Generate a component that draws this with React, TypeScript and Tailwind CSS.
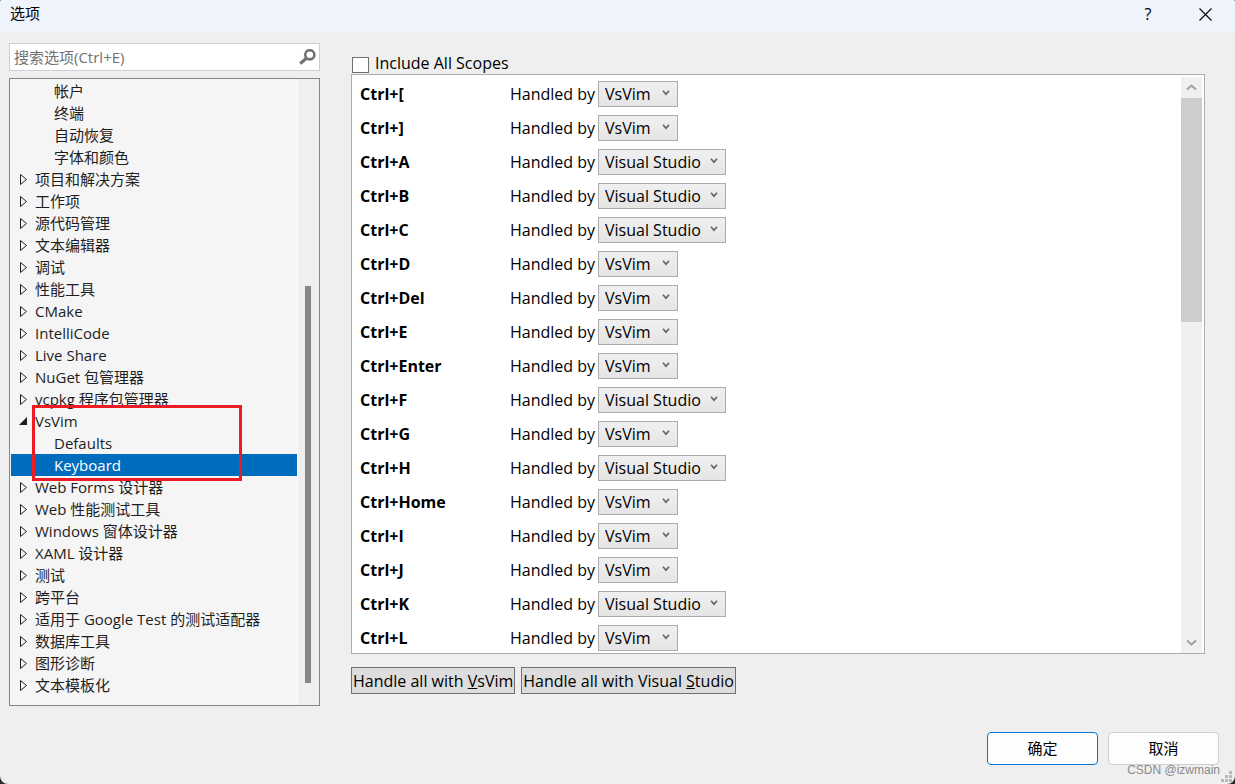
import React, { useState } from 'react';

type Handler = 'VsVim' | 'Visual Studio';

interface TreeNode {
  label: string;
  child?: boolean;
  open?: boolean;
  selected?: boolean;
}

const treeNodes: TreeNode[] = [
  { label: '帐户', child: true },
  { label: '终端', child: true },
  { label: '自动恢复', child: true },
  { label: '字体和颜色', child: true },
  { label: '项目和解决方案' },
  { label: '工作项' },
  { label: '源代码管理' },
  { label: '文本编辑器' },
  { label: '调试' },
  { label: '性能工具' },
  { label: 'CMake' },
  { label: 'IntelliCode' },
  { label: 'Live Share' },
  { label: 'NuGet 包管理器' },
  { label: 'vcpkg 程序包管理器' },
  { label: 'VsVim', open: true },
  { label: 'Defaults', child: true },
  { label: 'Keyboard', child: true, selected: true },
  { label: 'Web Forms 设计器' },
  { label: 'Web 性能测试工具' },
  { label: 'Windows 窗体设计器' },
  { label: 'XAML 设计器' },
  { label: '测试' },
  { label: '跨平台' },
  { label: '适用于 Google Test 的测试适配器' },
  { label: '数据库工具' },
  { label: '图形诊断' },
  { label: '文本模板化' },
];

const initialBindings: { keys: string; handler: Handler }[] = [
  { keys: 'Ctrl+[', handler: 'VsVim' },
  { keys: 'Ctrl+]', handler: 'VsVim' },
  { keys: 'Ctrl+A', handler: 'Visual Studio' },
  { keys: 'Ctrl+B', handler: 'Visual Studio' },
  { keys: 'Ctrl+C', handler: 'Visual Studio' },
  { keys: 'Ctrl+D', handler: 'VsVim' },
  { keys: 'Ctrl+Del', handler: 'VsVim' },
  { keys: 'Ctrl+E', handler: 'VsVim' },
  { keys: 'Ctrl+Enter', handler: 'VsVim' },
  { keys: 'Ctrl+F', handler: 'Visual Studio' },
  { keys: 'Ctrl+G', handler: 'VsVim' },
  { keys: 'Ctrl+H', handler: 'Visual Studio' },
  { keys: 'Ctrl+Home', handler: 'VsVim' },
  { keys: 'Ctrl+I', handler: 'VsVim' },
  { keys: 'Ctrl+J', handler: 'VsVim' },
  { keys: 'Ctrl+K', handler: 'Visual Studio' },
  { keys: 'Ctrl+L', handler: 'VsVim' },
];

const TitleBar: React.FC = () => (
  <header className="flex h-[33px] items-start justify-between bg-[#eff3fb] pl-[10px] pr-4">
    <h1 className="pt-[3px] leading-5">选项</h1>
    <div className="flex gap-[29px]">
      <button className="flex h-7 w-7 items-center justify-center" aria-label="Help">
        <span className="text-base leading-5">?</span>
      </button>
      <button className="flex h-7 w-7 items-center justify-center" aria-label="Close">
        <svg width="13" height="13" viewBox="0 0 13 13" fill="none" stroke="#111" strokeWidth="1.3">
          <path d="M0.5 0.5L12.5 12.5M12.5 0.5L0.5 12.5" />
        </svg>
      </button>
    </div>
  </header>
);

const SearchBox: React.FC = () => (
  <div className="flex h-7 items-center border border-[#cccedb] bg-white pl-1 pr-[3px]">
    <input
      type="text"
      aria-label="搜索选项"
      placeholder="搜索选项(Ctrl+E)"
      className="min-w-0 flex-1 bg-transparent outline-none placeholder:text-[#717171]"
    />
    <svg width="17" height="17" viewBox="0 0 17 17" fill="none" stroke="#717171">
      <circle cx="10.8" cy="5.8" r="4.6" strokeWidth="2.6" />
      <path d="M7.4 9.2L1.2 14.6" strokeWidth="3.2" />
    </svg>
  </div>
);

const TreeArrow: React.FC<{ open?: boolean }> = ({ open }) => (
  <svg width="10" height="12" viewBox="0 0 10 12">
    {open ? (
      <path d="M9 2V10H1Z" fill="#1e1e1e" />
    ) : (
      <path d="M2.5 1.5V11.5L8.5 6.5Z" fill="none" stroke="#1e1e1e" />
    )}
  </svg>
);

const OptionsTree: React.FC = () => (
  <div className="flex border border-[#828790] bg-[#f5f5f5]">
    <ul className="flex-1 pb-[9px] pl-px pt-px">
      {treeNodes.map((node) => (
        <li
          key={node.label}
          className={`
            relative flex h-[22px] items-center whitespace-nowrap leading-[22px]
            ${node.child ? 'pl-[43px]' : 'gap-[7px] pl-[7px]'}
            ${node.selected ? 'bg-[#006cbe] text-white' : 'text-[#1e1e1e]'}
          `}
        >
          {!node.child && <TreeArrow open={node.open} />}
          {node.label}
          {/* Highlight frame round the VsVim group */}
          {node.open && (
            <span className="pointer-events-none absolute -top-[5px] left-[21px] z-10 h-[76px] w-[210px] border-3 border-[#ed1c24]" />
          )}
        </li>
      ))}
    </ul>
    <div className="flex w-[22px] flex-col border-l border-white bg-[#efefef] pb-[22px] pl-[7px] pt-[207px]">
      <div className="w-[6px] flex-1 bg-[#868686]" />
    </div>
  </div>
);

const ScrollChevron: React.FC<{ up?: boolean }> = ({ up }) => (
  <svg width="11" height="7" viewBox="0 0 11 7" fill="none" stroke="#a0a0a0" strokeWidth="2">
    <path d={up ? 'M1 5.5L5.5 1.5L10 5.5' : 'M1 1.5L5.5 5.5L10 1.5'} />
  </svg>
);

interface HandlerSelectProps {
  id: string;
  value: Handler;
  onChange: (value: Handler) => void;
}

const HandlerSelect: React.FC<HandlerSelectProps> = ({ id, value, onChange }) => (
  <div className={`relative h-[26px] ${value === 'VsVim' ? 'w-20' : 'w-32'}`}>
    <select
      id={id}
      value={value}
      onChange={(e) => onChange(e.target.value as Handler)}
      className="h-full w-full appearance-none border border-[#acacac] bg-linear-to-b from-[#f0f0f0] to-[#e5e5e5] pl-[6px] leading-6"
    >
      <option>VsVim</option>
      <option>Visual Studio</option>
    </select>
    <svg
      className="pointer-events-none absolute right-2 top-[9px]"
      width="8"
      height="6"
      viewBox="0 0 8 6"
      fill="none"
      stroke="#606060"
      strokeWidth="1.6"
    >
      <path d="M1 0.8L4 4.2L7 0.8" />
    </svg>
  </div>
);

export default function App() {
  const [bindings, setBindings] = useState(initialBindings);
  const [allScopes, setAllScopes] = useState(false);

  const setHandler = (index: number, handler: Handler) =>
    setBindings(bindings.map((b, i) => (i === index ? { ...b, handler } : b)));

  const setAll = (handler: Handler) => setBindings(bindings.map((b) => ({ ...b, handler })));

  return (
    <div className="bg-[#2b2b2b]">
      <div className="relative flex min-h-screen flex-col overflow-hidden rounded-b-lg rounded-t-xs bg-[#efefef] font-['Open_Sans','Noto_Sans_CJK_SC',sans-serif] text-[15px] text-black">
        <TitleBar />

        <main className="flex gap-[31px] pl-[9px] pr-[30px] pt-[10px]">
          <aside className="flex w-[311px] shrink-0 flex-col gap-[7px]">
            <SearchBox />
            <OptionsTree />
          </aside>

          <section className="flex min-w-0 flex-1 flex-col text-base">
            <label className="flex h-[31px] items-end gap-[6px] pl-px">
              <input
                type="checkbox"
                checked={allScopes}
                onChange={(e) => setAllScopes(e.target.checked)}
                className="mb-px h-4 w-[17px] appearance-none border border-[#707070] bg-white checked:bg-[#0078d4]"
              />
              <span className="leading-[22px]">Include All Scopes</span>
            </label>

            <div className="flex border border-[#abadb3] bg-white">
              <ul className="flex flex-1 flex-col gap-2 pb-[2px] pl-2 pt-[6px]">
                {bindings.map((binding, i) => (
                  <li key={binding.keys} className="flex h-[26px] items-center">
                    <span className="w-[150px] font-bold">{binding.keys}</span>
                    <label htmlFor={`handler-${i}`} className="w-[88px]">
                      Handled by
                    </label>
                    <HandlerSelect
                      id={`handler-${i}`}
                      value={binding.handler}
                      onChange={(handler) => setHandler(i, handler)}
                    />
                  </li>
                ))}
              </ul>
              <div className="mr-[2px] mt-[2px] flex w-[21px] flex-col bg-[#f0f0f0]">
                <button className="flex h-[21px] items-center justify-center" aria-label="Scroll up">
                  <ScrollChevron up />
                </button>
                <div className="h-[224px] bg-[#cdcdcd]" />
                <button className="mt-auto flex h-[21px] items-center justify-center" aria-label="Scroll down">
                  <ScrollChevron />
                </button>
              </div>
            </div>

            <div className="flex gap-[6px] pt-[13px]">
              <button
                onClick={() => setAll('VsVim')}
                className="h-[27px] border border-[#707070] bg-[#dddddd] px-px leading-6"
              >
                Handle all with <u>V</u>sVim
              </button>
              <button
                onClick={() => setAll('Visual Studio')}
                className="h-[27px] border border-[#707070] bg-[#dddddd] px-px leading-6"
              >
                Handle all with Visual <u>S</u>tudio
              </button>
            </div>
          </section>
        </main>

        <footer className="flex justify-end gap-[10px] pb-[19px] pr-4 pt-[26px]">
          <button className="h-[33px] w-[111px] rounded border border-[#0078d4] bg-[#fdfdfd]">确定</button>
          <button className="h-[33px] w-[111px] rounded border border-[#d0d0d0] bg-[#fdfdfd]">取消</button>
        </footer>

        <span className="absolute bottom-1 right-[15px] font-['Liberation_Sans',sans-serif] text-[12px] leading-5 text-[#8a8a8a]">
          CSDN @izwmain
        </span>
        <svg className="absolute bottom-[2px] right-[3px]" width="11" height="11" viewBox="0 0 11 11" fill="#b8b8b8">
          <path d="M8 0h3v3h-3zM4 4h3v3h-3zM8 4h3v3h-3zM0 8h3v3h-3zM4 8h3v3h-3zM8 8h3v3h-3z" />
        </svg>
      </div>
    </div>
  );
}
